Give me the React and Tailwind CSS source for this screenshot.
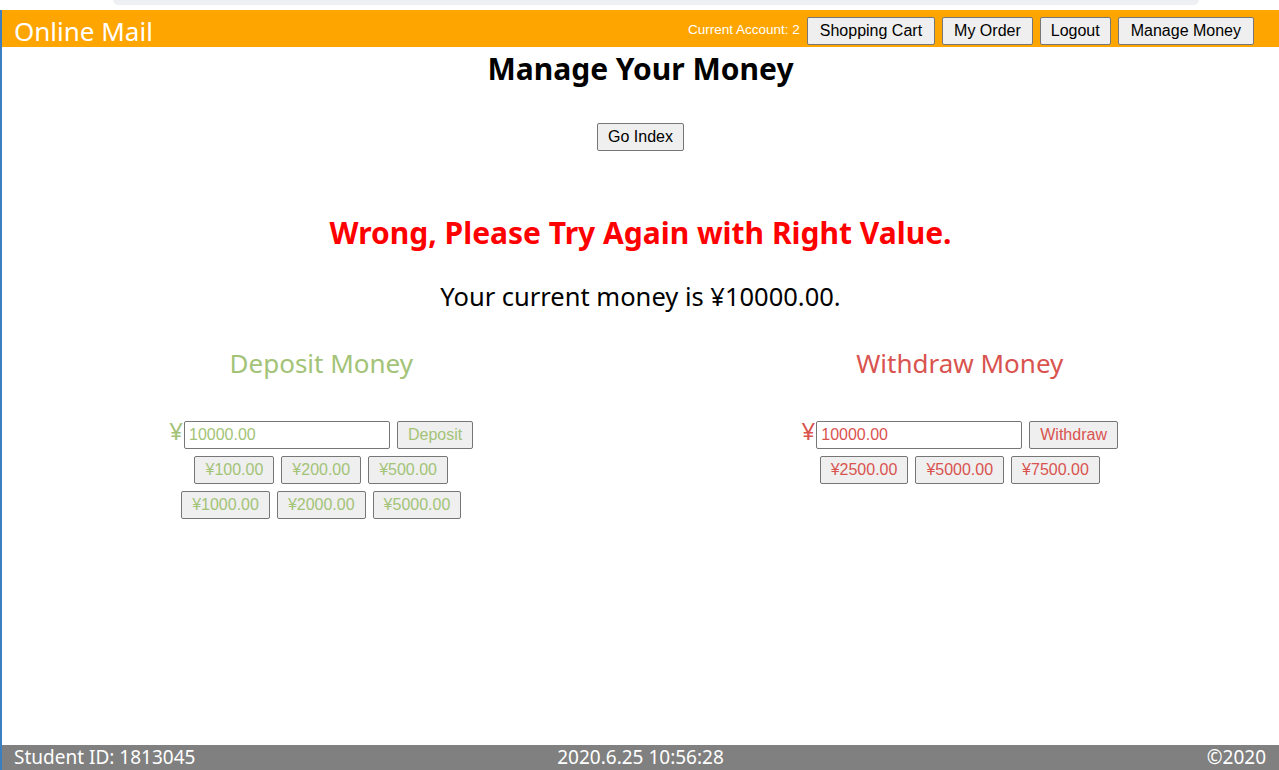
import React from "react";

const yahei = { fontFamily: '"Noto Sans", "Open Sans", sans-serif' };

function Btn({ children, className = "" }) {
  return (
    <button
      className={
        "h-[28px] border border-[#767676] rounded-[2px] bg-[#efefef] text-[16px] leading-[18px] " +
        className
      }
      style={{ fontFamily: '"Liberation Sans", Arial, sans-serif' }}
    >
      {children}
    </button>
  );
}

function Panel({ title, color, action, amounts }) {
  return (
    <div className="flex flex-col items-center">
      <h2 className="text-[26px] leading-[30px] mt-[2px]" style={{ ...yahei, color }}>
        {title}
      </h2>
      <div className="mt-[43px] flex items-start">
        <span className="text-[24px] leading-[24px] mr-[1px] -mt-[2px]" style={{ ...yahei, color }}>
          ¥
        </span>
        <input
          readOnly
          value="10000.00"
          className="w-[206px] h-[28px] border border-[#767676] rounded-[2px] px-[4px] text-[16px] outline-none"
          style={{ fontFamily: '"Liberation Sans", Arial, sans-serif', color }}
        />
        <Btn className="ml-[7px] h-[27px] px-[10px]">
          <span style={{ color }}>{action}</span>
        </Btn>
      </div>
      {amounts.map((row, i) => (
        <div key={i} className="mt-[7px] flex gap-[7px]">
          {row.map((a) => (
            <Btn key={a} className="px-[10px]">
              <span style={{ color }}>{a}</span>
            </Btn>
          ))}
        </div>
      ))}
    </div>
  );
}

export default function App() {
  const green = "#a3c377";
  const red = "#d9534f";
  return (
    <div className="min-h-[770px] h-[770px] flex flex-col bg-white overflow-hidden">
      <div className="h-[10px] flex bg-white">
        <div className="w-[113px]" />
        <div className="flex-1 h-[5px] bg-[#eef0f3] rounded-b-[8px]" />
        <div className="w-[80px]" />
      </div>
      <header className="h-[37px] bg-[#ffa500] flex items-center pl-[14px] pr-[25px] border-l-2 border-[#3b7fc0]">
        <div className="text-white text-[26px] leading-[30px] mt-[4px] -ml-[2px]" style={yahei}>
          Online Mail
        </div>
        <div className="ml-auto flex items-center gap-[7px] mt-[4px]">
          <span className="text-white text-[13.5px]" style={{ fontFamily: '"Liberation Sans", Arial, sans-serif' }}>
            Current Account: 2
          </span>
          <Btn className="h-[27px] px-[12px]">Shopping Cart</Btn>
          <Btn className="h-[27px] px-[11px]">My Order</Btn>
          <Btn className="h-[27px] px-[10px]">Logout</Btn>
          <Btn className="h-[27px] px-[12px]">Manage Money</Btn>
        </div>
      </header>
      <main className="flex-1 border-l-2 border-[#3b7fc0] flex flex-col items-center">
        <h1 className="text-[30px] leading-[40px] font-bold mt-[2px] text-black" style={yahei}>
          Manage Your Money
        </h1>
        <Btn className="mt-[34px] px-[10px]">Go Index</Btn>
        <div className="mt-[62px] text-[30px] leading-[40px] font-bold text-[#ff0000]" style={yahei}>
          Wrong, Please Try Again with Right Value.
        </div>
        <div className="mt-[25px] text-[25.5px] leading-[36px] text-black" style={yahei}>
          Your current money is ¥10000.00.
        </div>
        <div className="mt-[32px] w-full grid grid-cols-2">
          <Panel
            title="Deposit Money"
            color={green}
            action="Deposit"
            amounts={[
              ["¥100.00", "¥200.00", "¥500.00"],
              ["¥1000.00", "¥2000.00", "¥5000.00"],
            ]}
          />
          <Panel
            title="Withdraw Money"
            color={red}
            action="Withdraw"
            amounts={[["¥2500.00", "¥5000.00", "¥7500.00"]]}
          />
        </div>
      </main>
      <footer className="h-[25px] bg-[#808080] flex items-center px-[14px] text-white text-[19px] leading-[25px] relative border-l-2 border-[#3b7fc0]" style={yahei}>
        <span className="-ml-[2px]">Student ID: 1813045</span>
        <span className="absolute left-1/2 -translate-x-1/2">2020.6.25 10:56:28</span>
        <span className="ml-auto -mr-[1px]">©2020</span>
      </footer>
    </div>
  );
}
